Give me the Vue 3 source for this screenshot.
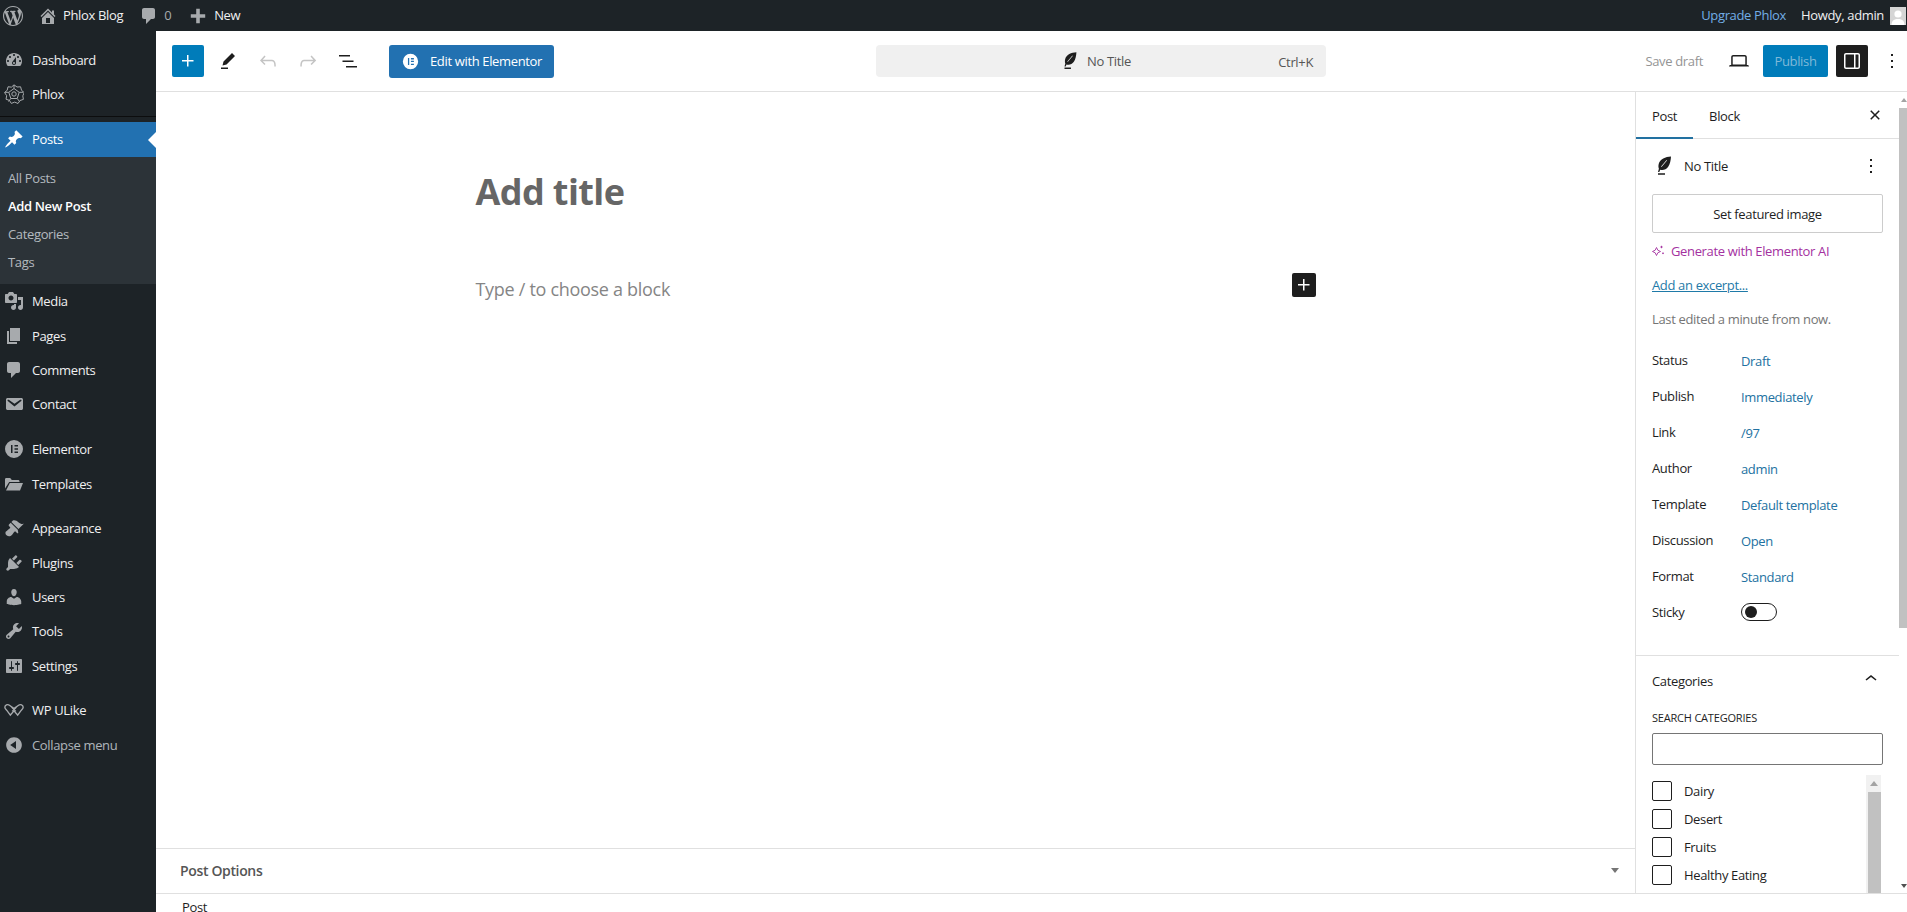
<script setup>
const dash = {
  dashboard: 'M3.76 16h12.48c1.1-1.37 1.76-3.11 1.76-5 0-4.42-3.58-8-8-8s-8 3.58-8 8c0 1.89.66 3.63 1.76 5zM10 4c.55 0 1 .45 1 1s-.45 1-1 1-1-.45-1-1 .45-1 1-1zM6 6c.55 0 1 .45 1 1s-.45 1-1 1-1-.45-1-1 .45-1 1-1zm8 0c.55 0 1 .45 1 1s-.45 1-1 1-1-.45-1-1 .45-1 1-1zm-5.37 5.55L12 7v6c0 1.1-.9 2-2 2s-2-.9-2-2c0-.57.24-1.08.63-1.45zM4 10c.55 0 1 .45 1 1s-.45 1-1 1-1-.45-1-1 .45-1 1-1zm12 0c.55 0 1 .45 1 1s-.45 1-1 1-1-.45-1-1 .45-1 1-1zm-5 3c0-.55-.45-1-1-1s-1 .45-1 1 .45 1 1 1 1-.45 1-1z',
  post: 'M10.44 3.02l1.82-1.82 6.36 6.35-1.83 1.82c-1.05-.68-2.48-.57-3.41.36l-.75.75c-.92.93-1.04 2.35-.35 3.41l-1.83 1.82-2.41-2.41-2.8 2.79c-.42.42-3.38 2.71-3.8 2.29s1.86-3.39 2.28-3.81l2.79-2.79L4.1 9.36l1.83-1.82c1.05.69 2.48.57 3.4-.36l.75-.75c.93-.92 1.05-2.35.36-3.41z',
  media: 'M13 11V4c0-.55-.45-1-1-1h-1.67L9 1H5L3.67 3H2c-.55 0-1 .45-1 1v7c0 .55.45 1 1 1h10c.55 0 1-.45 1-1zM7 4.5c1.38 0 2.5 1.12 2.5 2.5S8.38 9.5 7 9.5 4.5 8.38 4.5 7 5.62 4.5 7 4.5zM14 6h5v10.5c0 1.38-1.12 2.5-2.5 2.5S14 17.88 14 16.5s1.12-2.5 2.5-2.5c.17 0 .34.02.5.05V9h-3V6zm-4 8.05V13h2v3.5c0 1.38-1.12 2.5-2.5 2.5S7 17.88 7 16.5 8.12 14 9.5 14c.17 0 .34.02.5.05z',
  page: 'M6 15V2h10v13H6zm-1 1h8v2H3V5h2v11z',
  comment: 'M5 2h9c1.1 0 2 .9 2 2v7c0 1.1-.9 2-2 2h-2l-5 5v-5H5c-1.1 0-2-.9-2-2V4c0-1.1.9-2 2-2z',
  email: 'M3.87 4h13.25C18.37 4 19 4.59 19 5.79v8.42c0 1.19-.63 1.79-1.88 1.79H3.87c-1.25 0-1.88-.6-1.88-1.79V5.79c0-1.2.63-1.79 1.88-1.79zm6.62 8.6l6.74-5.53c.24-.2.43-.66.13-1.07-.29-.41-.82-.42-1.17-.17l-5.7 3.86L4.8 5.83c-.35-.25-.88-.24-1.17.17-.3.41-.11.87.13 1.07z',
  folder: 'M1 14.500V5.300C1 4.600 1.600 4 2.300 4h3.900l1.600 2h6.400c.7 0 1.300.6 1.300 1.300V8H5.200zM5.800 9H19l-3 7.500H2z',
  appearance: 'M14.48 11.06L7.41 3.99l1.5-1.5c.5-.56 2.3-.47 3.51.32 1.21.8 1.43 1.28 2.91 2.1 1.18.64 2.45 1.26 4.45.85zm-.71.71L6.7 4.7 4.93 6.47c-.39.39-.39 1.02 0 1.41l1.06 1.06c.39.39.39 1.03 0 1.42-.6.6-1.43 1.11-2.21 1.69-.35.26-.7.53-1.01.84C1.43 13.23.78 15.4 2.58 17.21c1.8 1.8 3.98 1.15 5.31-.17.31-.31.58-.66.84-1.01.57-.78 1.09-1.61 1.69-2.21.39-.39 1.03-.39 1.42 0l1.06 1.06c.39.39 1.02.39 1.41 0z',
  plugins: 'M13.11 4.36L9.87 7.6 8 5.73l3.24-3.24c.35-.34 1.05-.2 1.56.32.52.51.66 1.21.31 1.55zm-8 1.77l.91-1.12 9.01 9.01-1.19.84c-.71.71-2.63 1.16-3.82 1.16H6.14L4.9 17.26c-.59.59-1.54.59-2.12 0-.59-.58-.59-1.53 0-2.12l1.24-1.24v-3.88c0-1.13.4-3.19 1.09-3.89zm7.26 3.97l3.24-3.24c.34-.35 1.04-.21 1.55.31.52.51.66 1.21.31 1.55l-3.24 3.25z',
  users: 'M10 9.25c-2.27 0-2.73-3.44-2.73-3.44C7 4.02 7.82 2 9.97 2c2.16 0 2.98 2.02 2.71 3.81 0 0-.41 3.44-2.68 3.44zm0 2.57L12.72 10c2.39 0 4.52 2.33 4.52 4.53v2.49s-3.65 1.13-7.24 1.13c-3.65 0-7.24-1.13-7.24-1.13v-2.49c0-2.25 1.94-4.48 4.47-4.48z',
  tools: 'M16.68 9.77c-1.34 1.34-3.3 1.67-4.95.99l-5.41 6.52c-.99.99-2.59.99-3.58 0s-.99-2.59 0-3.57l6.52-5.42c-.68-1.65-.35-3.61.99-4.95 1.28-1.28 3.12-1.62 4.72-1.06l-2.89 2.89 2.82 2.82 2.86-2.87c.53 1.58.18 3.39-1.08 4.65zM3.81 16.21c.4.39 1.04.39 1.43 0 .4-.4.4-1.04 0-1.43-.39-.4-1.03-.4-1.43 0-.39.39-.39 1.03 0 1.43z',
  settings: 'M18 16V4c0-.55-.45-1-1-1H3c-.55 0-1 .45-1 1v12c0 .55.45 1 1 1h14c.55 0 1-.45 1-1zM8 11h1c.55 0 1 .45 1 1s-.45 1-1 1H8v1.5c0 .28-.22.5-.5.5s-.5-.22-.5-.5V13H6c-.55 0-1-.45-1-1s.45-1 1-1h1V5.5c0-.28.22-.5.5-.5s.5.22.5.5V11zm5-2h-1c-.55 0-1-.45-1-1s.45-1 1-1h1V5.5c0-.28.22-.5.5-.5s.5.22.5.5V7h1c.55 0 1 .45 1 1s-.45 1-1 1h-1v5.5c0 .28-.22.5-.5.5s-.5-.22-.5-.5V9z',
  collapse: 'M10 2.16c4.33 0 7.84 3.51 7.84 7.84s-3.51 7.84-7.84 7.84S2.16 14.33 2.16 10 5.71 2.16 10 2.16zm2 11.72V6.12L6.18 9.97z',
  elementor: 'M10 1a9 9 0 1 0 0 18 9 9 0 0 0 0-18zM7 6h1.5v8H7zm3.5 0H14v1.5h-3.5zm0 3.2H14v1.5h-3.5zm0 3.3H14V14h-3.5z',
  home: 'M16 8.5l1.53 1.53-1.06 1.06L10 4.62l-6.47 6.47-1.06-1.06L10 2.5l4 4v-2h2v4zm-6-2.46l6 5.99V18H4v-5.97zM12 17v-5H8v5h4z',
  wp: 'M20 10c0-5.51-4.49-10-10-10C4.48 0 0 4.49 0 10c0 5.52 4.48 10 10 10 5.51 0 10-4.48 10-10zM7.78 15.37L4.37 6.22c.55-.02 1.17-.08 1.17-.08.5-.06.44-1.13-.06-1.11 0 0-1.45.11-2.37.11-.18 0-.37 0-.58-.01C4.12 2.69 6.87 1.11 10 1.11c2.33 0 4.45.87 6.05 2.34-.68-.11-1.65.39-1.65 1.58 0 .74.45 1.36.9 2.1.35.61.55 1.36.55 2.46 0 1.49-1.4 5-1.4 5l-3.03-8.37c.54-.02.82-.17.82-.17.5-.05.44-1.25-.06-1.22 0 0-1.44.12-2.38.12-.87 0-2.33-.12-2.33-.12-.5-.03-.56 1.2-.06 1.22l.92.08 1.26 3.41zM17.41 10c.24-.64.74-1.87.43-4.25.7 1.29 1.05 2.71 1.05 4.25 0 3.29-1.73 6.24-4.4 7.78.97-2.59 1.94-5.2 2.92-7.78zM6.1 18.09C3.12 16.65 1.11 13.53 1.11 10c0-1.3.23-2.48.72-3.59C3.25 10.3 4.67 14.2 6.1 18.09zm4.03-6.63l2.58 6.98c-.86.29-1.76.45-2.71.45-.79 0-1.57-.11-2.29-.33.81-2.38 1.62-4.74 2.42-7.1z',
  plusBar: 'M8 2h4v6h6v4h-6v6H8v-6H2V8h6z'
}
const g = {
  plus: 'M11 12.5V17.5H12.5V12.5H17.5V11H12.5V6H11V11H6V12.5H11Z',
  pen: 'M19 7l-3-3-8.5 8.5-1 4 4-1L19 7zM12 18.5H5V20h7v-1.5z',
  undo: 'M18.3 11.7c-.6-.6-1.4-.9-2.3-.9H6.7l2.9-3.3-1.1-1-4.5 5L8.5 16l1-1-2.7-2.7H16c.5 0 .9.2 1.3.5 1 1 1 3.4 1 4.5v.3h1.5v-.2c0-1.5 0-4.3-1.5-5.7z',
  redo: 'M15.6 6.5l-1.1 1 2.9 3.3H8c-.9 0-1.7.3-2.3.9-1.4 1.5-1.4 4.2-1.4 5.6v.2h1.5v-.3c0-1.1 0-3.5 1-4.5.3-.3.7-.5 1.3-.5h9.2L14.5 15l1.1 1.1 4.6-4.6-4.6-5z',
  list: 'M3 6h11v1.5H3V6zM6.5 11.5h11V13h-11v-1.5zM21 17H10v1.5h11V17z',
  desktop: 'M20.5 16h-.7V8c0-1.1-.9-2-2-2H6.2c-1.1 0-2 .9-2 2v8h-.7c-.8 0-1.5.7-1.5 1.5h20c0-.8-.7-1.5-1.5-1.5zM5.7 8c0-.3.2-.5.5-.5h11.6c.3 0 .5.2.5.5v7.6H5.7V8z',
  drawer: 'M18 4H6c-1.1 0-2 .9-2 2v12c0 1.1.9 2 2 2h12c1.1 0 2-.9 2-2V6c0-1.1-.9-2-2-2zm-4 14.5H6c-.3 0-.5-.2-.5-.5V6c0-.3.2-.5.5-.5h8v13zm4.5-.5c0 .3-.2.5-.5.5h-2.500v-13H18c.3 0 .5.2.5.5v12z',
  more: 'M13 19h-2v-2h2v2zm0-6h-2v-2h2v2zm0-6h-2V5h2v2z',
  close: 'M12 13.06l3.712 3.713 1.061-1.06L13.061 12l3.712-3.712-1.06-1.06L12 10.938 8.288 7.227l-1.061 1.06L10.939 12l-3.712 3.712 1.06 1.061L12 13.061z',
  up: 'M6.5 12.4L12 8l5.5 4.4-.9 1.2L12 10l-4.5 3.6-1-1.2z',
  feather: 'M19 2.500c-5.500.2-11 2.500-12.300 7.500-.5 2-.2 3.600.2 4.700L6 18h1.300l.9-2.300c2.900.9 6-.2 8-2.900 1.900-2.700 2.600-6.600 2.800-10.300zM15 6.500L9.500 13l-.4-.4 5.500-6.500zM6 19.200h7v1.500H6z'
}
const menuTop = [
  { label: 'Dashboard', icon: 'dashboard' },
  { label: 'Phlox', icon: 'phlox' }
]
const sub = ['All Posts', 'Add New Post', 'Categories', 'Tags']
const groups = [
  [
    { label: 'Media', icon: 'media' },
    { label: 'Pages', icon: 'page' },
    { label: 'Comments', icon: 'comment' },
    { label: 'Contact', icon: 'email' }
  ],
  [
    { label: 'Elementor', icon: 'elementor' },
    { label: 'Templates', icon: 'folder' }
  ],
  [
    { label: 'Appearance', icon: 'appearance' },
    { label: 'Plugins', icon: 'plugins' },
    { label: 'Users', icon: 'users' },
    { label: 'Tools', icon: 'tools' },
    { label: 'Settings', icon: 'settings' }
  ],
  [
    { label: 'WP ULike', icon: 'ulike' },
    { label: 'Collapse menu', icon: 'collapse', dim: true }
  ]
]
const rows = [
  ['Status', 'Draft'],
  ['Publish', 'Immediately'],
  ['Link', '/97'],
  ['Author', 'admin'],
  ['Template', 'Default template'],
  ['Discussion', 'Open'],
  ['Format', 'Standard']
]
const cats = ['Dairy', 'Desert', 'Fruits', 'Healthy Eating']
</script>

<template>
  <div class="app">
    <header class="bar">
      <svg class="bi wp" viewBox="0 0 20 20"><path :d="dash.wp" /></svg>
      <svg class="bi home" viewBox="0 0 20 20"><path :d="dash.home" /></svg>
      <span class="bt site">Phlox Blog</span>
      <svg class="bi cm" viewBox="0 0 20 20"><path :d="dash.comment" /></svg>
      <span class="bt zero">0</span>
      <svg class="bi pl" viewBox="0 0 20 20"><path :d="dash.plusBar" /></svg>
      <span class="bt">New</span>
      <span class="bt upgrade">Upgrade Phlox</span>
      <span class="bt howdy">Howdy, admin</span>
      <span class="avatar">
        <svg viewBox="0 0 16 18"><rect width="16" height="18" fill="#d5d5d5" /><circle cx="8" cy="7" r="3.6" fill="#fff" /><path d="M1.5 18c0-4.5 3-6 6.5-6s6.500 1.500 6.500 6z" fill="#fff" /></svg>
      </span>
    </header>

    <div class="body">
      <nav class="side">
        <a v-for="m in menuTop" :key="m.label" class="item">
          <svg v-if="m.icon === 'phlox'" class="mi line" viewBox="0 0 20 20" stroke="#a7aaad" stroke-width="1"><path d="M10 .8l3 2.200 3.600-.2.900 3.500 2.700 2.300-1.400 3.300.6 3.500-3.400 1.100-2 3-3.300-1.400-3.400 1.300-1.900-3-3.400-1.200.7-3.500L.5 8.500l2.700-2.200.8-3.500 3.500.3z" /><path d="M10 4.500l5.200 3.800-2 6.200H6.800l-2-6.200z" /><circle cx="10" cy="10" r="2.200" /><path d="M10 1v3.500M19 8.300l-3.800 0M15.500 17.500l-2.300-3M4.500 17.500l2.300-3M1 8.300l3.800 0" /></svg>
          <svg v-else class="mi" viewBox="0 0 20 20"><path :d="dash[m.icon]" fill-rule="evenodd" /></svg>
          <span>{{ m.label }}</span>
        </a>
        <div class="sep"></div>
        <a class="item current">
          <svg class="mi" viewBox="0 0 20 20"><path :d="dash.post" /></svg>
          <span>Posts</span>
        </a>
        <div class="submenu">
          <a v-for="(s, i) in sub" :key="s" :class="['subitem', { active: i === 1 }]">{{ s }}</a>
        </div>
        <div v-for="(grp, gi) in groups" :key="gi" class="grp">
          <a v-for="m in grp" :key="m.label" :class="['item', { dim: m.dim }]">
            <svg v-if="m.icon === 'ulike'" class="mi wide line" viewBox="0 0 24 15" stroke="#a7aaad" stroke-width="1.500"><path d="M2 4.500C2 2 5 .8 7 2.300L12 6l5-3.700C19 .8 22 2 22 4.500c0 1.300-.8 2-2 3.200L16 13l-4-4.500L8 13 4 7.700C2.800 6.500 2 5.800 2 4.500z" /><path d="M9.500 4.500L14 9M14.500 4.500L10 9" /></svg>
            <svg v-else class="mi" viewBox="0 0 20 20"><path :d="dash[m.icon]" fill-rule="evenodd" /></svg>
            <span>{{ m.label }}</span>
          </a>
        </div>
      </nav>

      <main class="main">
        <div class="top">
          <button class="tb primary"><svg viewBox="0 0 24 24"><path :d="g.plus" /></svg></button>
          <span class="ic"><svg viewBox="0 0 24 24"><path :d="g.pen" /></svg></span>
          <span class="ic off"><svg viewBox="0 0 24 24"><path :d="g.undo" /></svg></span>
          <span class="ic off"><svg viewBox="0 0 24 24"><path :d="g.redo" /></svg></span>
          <span class="ic"><svg viewBox="0 0 24 24"><path :d="g.list" /></svg></span>
          <button class="el">
            <svg viewBox="0 0 20 20"><path :d="dash.elementor" fill-rule="evenodd" /></svg>
            <span>Edit with Elementor</span>
          </button>
          <div class="cmd">
            <svg viewBox="0 0 24 24"><path :d="g.feather" fill-rule="evenodd" /></svg>
            <span class="cmd-title">No Title</span>
            <span class="cmd-key">Ctrl+K</span>
          </div>
          <div class="right">
            <span class="save">Save draft</span>
            <span class="ic dk"><svg viewBox="0 0 24 24"><path :d="g.desktop" /></svg></span>
            <button class="publish">Publish</button>
            <button class="tb dark"><svg viewBox="0 0 24 24"><path :d="g.drawer" /></svg></button>
            <span class="ic mr"><svg viewBox="0 0 24 24"><path :d="g.more" /></svg></span>
          </div>
        </div>

        <div class="work">
          <div class="editor">
            <div class="canvas">
              <div class="column">
                <h1 class="title">Add title</h1>
                <div class="blockline">
                  <span>Type / to choose a block</span>
                  <button class="blockplus"><svg viewBox="0 0 24 24"><path :d="g.plus" /></svg></button>
                </div>
              </div>
            </div>
            <div class="meta">
              <span>Post Options</span>
              <i class="caret"></i>
            </div>
          </div>

          <aside class="panel">
            <div class="panel-in">
              <div class="tabs">
                <span class="tab on">Post</span>
                <span class="tab">Block</span>
                <svg class="x" viewBox="0 0 24 24"><path :d="g.close" /></svg>
              </div>
              <section class="sec">
                <div class="ttl">
                  <svg viewBox="0 0 24 24"><path :d="g.feather" fill-rule="evenodd" /></svg>
                  <span>No Title</span>
                  <svg class="ttl-more" viewBox="0 0 24 24"><path :d="g.more" /></svg>
                </div>
                <button class="feat">Set featured image</button>
                <div class="gen">
                  <svg class="line" viewBox="0 0 13 12" stroke="#a4319f" stroke-width=".9"><path d="M4.500 2.500l1.300 2.700 2.700 1.300-2.700 1.300-1.300 2.700-1.300-2.700L.5 6.500l2.700-1.300z" /><path d="M9.500 .8v2.400M8.300 2h2.400M11 7.500v1.600M10.200 8.300h1.600" /></svg>
                  <span>Generate with Elementor AI</span>
                </div>
                <a class="excerpt">Add an excerpt...</a>
                <div class="edited">Last edited a minute from now.</div>
                <div class="rows">
                  <div v-for="r in rows" :key="r[0]" class="row">
                    <span class="k">{{ r[0] }}</span>
                    <span class="v">{{ r[1] }}</span>
                  </div>
                  <div class="row">
                    <span class="k">Sticky</span>
                    <span class="toggle"><i></i></span>
                  </div>
                </div>
              </section>
              <section class="cats">
                <div class="cats-h">
                  <span>Categories</span>
                  <svg viewBox="0 0 24 24"><path :d="g.up" /></svg>
                </div>
                <label class="lab">SEARCH CATEGORIES</label>
                <div class="search"></div>
                <div class="checks">
                  <div class="check-list">
                    <div v-for="c in cats" :key="c" class="check"><i></i><span>{{ c }}</span></div>
                  </div>
                  <div class="mini-sb"><b class="up"></b><b class="th"></b></div>
                </div>
              </section>
            </div>
            <div class="sb"><b class="a1"></b><b class="th"></b><b class="a2"></b></div>
          </aside>
        </div>

        <div class="foot">Post</div>
      </main>
    </div>
  </div>
</template>

<style>
html, body { margin: 0; padding: 0; background: #fff; overflow: hidden; }
</style>

<style scoped>
.app { width: 1907px; height: 912px; overflow: hidden; display: flex; flex-direction: column; font-family: "Open Sans", "Noto Sans", sans-serif; font-size: 13px; letter-spacing: -0.35px; color: #1e1e1e; }
svg { display: block; flex: none; fill: currentColor; }
svg.line { fill: none; }
button { font: inherit; letter-spacing: inherit; border: 0; padding: 0; margin: 0; cursor: default; }

.bar { height: 31px; flex: none; background: #1d2327; display: flex; align-items: center; color: #f0f0f1; }
.bi { color: #a7aaad; }
.wp { width: 20px; height: 20px; margin: 0 17px 0 3px; }
.home { width: 20px; height: 20px; margin-right: 5px; margin-left: -2px; }
.bt { line-height: 31px; white-space: nowrap; }
.site { margin-right: 16px; }
.cm { width: 20px; height: 20px; margin-right: 5px; }
.zero { color: #a7aaad; margin-right: 15px; width: 10px; }
.pl { width: 18px; height: 18px; margin-right: 7px; }
.upgrade { margin-left: auto; color: #72aee6; margin-right: 15px; }
.howdy { margin-right: 6px; }
.avatar { width: 16px; height: 18px; margin-right: 1px; }
.avatar svg { width: 16px; height: 18px; }

.body { flex: 1; min-height: 0; display: flex; }
.side { width: 156px; flex: none; background: #1d2327; padding-top: 12px; color: #f0f0f1; box-sizing: border-box; }
.item { display: flex; align-items: center; height: 34.3px; padding-left: 4px; gap: 8px; position: relative; box-sizing: border-box; }
.mi { width: 20px; height: 20px; color: #a7aaad; }
.mi.wide { width: 22px; height: 14px; margin: 0 -1px 0 -1px; }
.sep { height: 10.2px; box-sizing: border-box; padding-top: 4px; }
.sep::after { content: ""; display: block; height: 1px; background: #0c0d0e; }
.current { background: #2271b1; color: #fff; height: 35px; }
.current .mi { color: #fff; }
.current::after { content: ""; position: absolute; right: 0; top: 10px; border: 8px solid transparent; border-right-color: #fff; border-left: 0; }
.submenu { background: #2c3338; padding: 7px 0 8px; height: 127.5px; box-sizing: border-box; }
.subitem { display: block; height: 28px; line-height: 28px; padding-left: 8px; color: rgba(240, 246, 252, .7); }
.subitem.active { color: #fff; font-weight: 600; }
.grp { margin-bottom: 10.6px; }
.dim { color: rgba(240, 246, 252, .7); }

.main { flex: 1; min-width: 0; display: flex; flex-direction: column; background: #fff; }
.top { height: 61px; flex: none; display: flex; align-items: center; border-bottom: 1px solid #e0e0e0; padding-left: 16px; box-sizing: border-box; }
.tb { width: 32px; height: 32px; border-radius: 2px; display: flex; align-items: center; justify-content: center; color: #fff; }
.tb svg { width: 24px; height: 24px; }
.primary { background: #007cba; margin-right: 4px; }
.dark { background: #1e1e1e; border-radius: 2px; }
.ic { width: 40px; height: 32px; display: flex; align-items: center; justify-content: center; color: #1e1e1e; flex: none; }
.ic svg { width: 24px; height: 24px; }
.off { color: #c4c4c4; }
.el { margin-left: 21px; width: 165px; height: 33px; background: #2271b1; color: #fff; border-radius: 3px; display: flex; align-items: center; padding-left: 13px; gap: 11px; box-sizing: border-box; }
.el svg { width: 17px; height: 17px; }
.cmd { margin-left: 322px; width: 450px; height: 32px; background: #f0f0f0; border-radius: 4px; display: flex; align-items: center; padding-left: 183px; box-sizing: border-box; color: #555; }
.cmd svg { width: 22px; height: 22px; color: #1e1e1e; margin-right: 6px; }
.cmd-key { margin-left: auto; margin-right: 13px; padding-top: 1px; }
.right { margin-left: auto; display: flex; align-items: center; padding-right: 3px; }
.save { color: #949494; margin-right: 16px; }
.dk { margin-right: 4px; }
.publish { width: 65px; height: 32px; background: #007cba; color: #7fb9d8; border-radius: 2px; margin-right: 8px; }
.mr { width: 24px; margin-left: 12px; }

.work { flex: 1; min-height: 0; display: flex; border-bottom: 1px solid #e0e0e0; }
.editor { flex: 1; min-width: 0; display: flex; flex-direction: column; }
.canvas { flex: 1; min-height: 0; display: flex; justify-content: center; }
.column { width: 840px; padding-top: 72px; box-sizing: border-box; }
.title { margin: 0; font-size: 36px; line-height: 56px; font-weight: 700; color: #666; letter-spacing: -0.6px; }
.blockline { position: relative; margin-top: 55px; font-size: 18px; color: #858585; line-height: 28px; letter-spacing: -0.3px; }
.blockplus { position: absolute; right: 0; top: -2px; width: 24px; height: 24px; background: #1e1e1e; color: #fff; border-radius: 2px; }
.blockplus svg { width: 24px; height: 24px; }
.meta { height: 45px; flex: none; border-top: 1px solid #e0e0e0; display: flex; align-items: center; padding: 0 16px 2px 24px; font-size: 14px; font-weight: 600; color: #555; box-sizing: border-box; justify-content: space-between; }
.caret { border: 4px solid transparent; border-top: 5px solid #757575; border-bottom: 0; }

.panel { width: 272px; flex: none; border-left: 1px solid #e0e0e0; display: flex; box-sizing: border-box; overflow: hidden; }
.panel-in { flex: 1; min-width: 0; overflow: hidden; }
.tabs { height: 47px; display: flex; align-items: center; border-bottom: 1px solid #e0e0e0; position: relative; box-sizing: border-box; }
.tab { height: 46px; line-height: 48px; padding: 0 16px; box-sizing: border-box; position: relative; }
.tab.on::after { content: ""; position: absolute; left: 0; right: 0; bottom: -1px; height: 2px; background: #2271a1; }
.x { width: 24px; height: 24px; position: absolute; right: 12px; top: 11px; }
.sec { padding: 16px 16px 25px; border-bottom: 1px solid #e0e0e0; }
.ttl { height: 22px; display: flex; align-items: center; margin-bottom: 17px; color: #1e1e1e; }
.ttl svg { width: 24px; height: 24px; }
.ttl span { margin-left: 8px; }
.ttl .ttl-more { margin-left: auto; margin-right: 0; }
.feat { width: 100%; height: 39px; background: #fff; border: 1px solid #ccc; border-radius: 2px; display: block; color: #1e1e1e; }
.gen { margin-top: 9px; height: 18px; display: flex; align-items: center; gap: 6px; color: #a4319f; }
.gen svg { width: 13px; height: 12px; }
.excerpt { display: block; margin-top: 16px; line-height: 18px; color: #1f7aa8; text-decoration: underline; }
.edited { margin-top: 16px; line-height: 18px; color: #757575; }
.rows { margin-top: 14px; }
.row { height: 36px; display: flex; align-items: center; }
.k { width: 89px; }
.v { color: #2271a1; padding-top: 2px; }
.toggle { width: 36px; height: 18px; border: 1px solid #1e1e1e; border-radius: 9px; box-sizing: border-box; display: flex; align-items: center; padding-left: 3px; }
.toggle i { width: 12px; height: 12px; background: #1e1e1e; border-radius: 50%; }
.cats { padding: 0 16px; }
.cats-h { height: 50px; display: flex; align-items: center; justify-content: space-between; font-weight: 500; font-size: 13px; }
.cats-h svg { width: 24px; height: 24px; margin-right: 0; margin-top: -4px; }
.lab { display: block; margin-top: 5px; font-size: 11px; line-height: 14px; font-weight: 500; letter-spacing: -0.2px; }
.search { margin-top: 8px; height: 32px; border: 1px solid #757575; border-radius: 2px; box-sizing: border-box; }
.checks { margin-top: 10px; display: flex; justify-content: space-between; height: 160px; }
.check-list { padding-top: 6px; }
.check { display: flex; align-items: center; height: 20px; margin-bottom: 8px; }
.check i { width: 20px; height: 20px; border: 1px solid #1e1e1e; border-radius: 2px; box-sizing: border-box; margin-right: 12px; }
.check span { color: #1e1e1e; }
.mini-sb { width: 15px; background: #f1f1f1; margin-right: 2px; position: relative; }
.mini-sb .th { position: absolute; left: 2px; right: 0; top: 17px; bottom: 0; background: #c1c1c1; }
.mini-sb .up { position: absolute; left: 4px; top: 6px; border: 4px solid transparent; border-bottom: 5px solid #a3a3a3; border-top: 0; }
.sb { width: 8px; flex: none; position: relative; background: #fff; }
.sb .th { position: absolute; left: 0; right: 0; top: 16px; height: 520px; background: #c1c1c1; }
.sb .a1 { position: absolute; left: 2px; top: 6px; border: 3px solid transparent; border-bottom: 4px solid #a3a3a3; border-top: 0; }
.sb .a2 { position: absolute; left: 2px; bottom: 5px; border: 3px solid transparent; border-top: 4px solid #505050; border-bottom: 0; }
.foot { height: 18px; flex: none; padding-left: 26px; font-size: 13px; line-height: 26px; }
</style>
